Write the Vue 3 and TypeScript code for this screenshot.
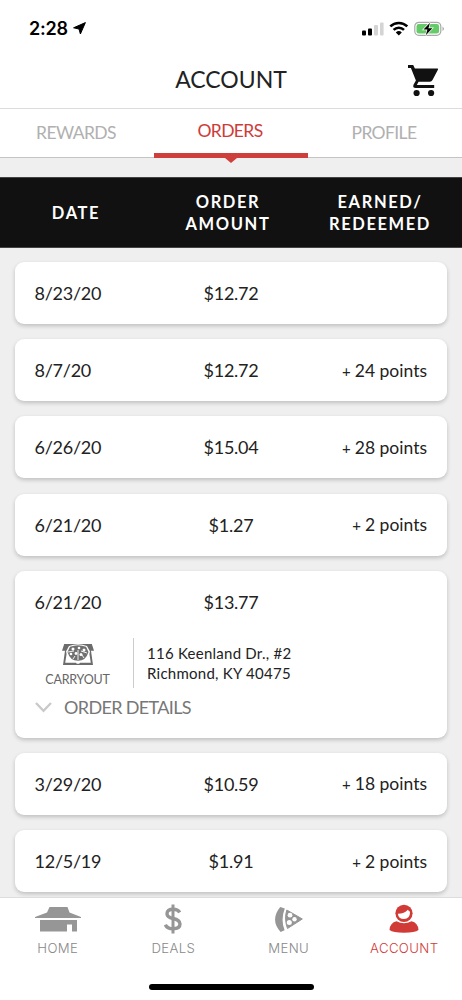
<script setup lang="ts">
interface Order {
  date: string
  amount: string
  points?: string
  open?: boolean
}

const tabs = [
  { label: 'REWARDS', active: false },
  { label: 'ORDERS', active: true },
  { label: 'PROFILE', active: false },
]

const orders: Order[] = [
  { date: '8/23/20', amount: '$12.72' },
  { date: '8/7/20', amount: '$12.72', points: '24 points' },
  { date: '6/26/20', amount: '$15.04', points: '28 points' },
  { date: '6/21/20', amount: '$1.27', points: '2 points' },
  { date: '6/21/20', amount: '$13.77', open: true },
  { date: '3/29/20', amount: '$10.59', points: '18 points' },
  { date: '12/5/19', amount: '$1.91', points: '2 points' },
]
</script>

<template>
  <div class="screen">
    <div class="status">
      <span class="time">2:28</span>
      <svg class="loc" width="13" height="13" viewBox="0 0 13 13"><path d="M12.4.6 7.400 12 6 7 .6 5.800Z" fill="#000" stroke="#000" stroke-width="1" stroke-linejoin="round" /></svg>
      <svg class="indicators" width="84" height="16" viewBox="0 0 84 16">
        <rect x="0" y="9.500" width="4" height="5" rx="1" />
        <rect x="6" y="7.500" width="4" height="7" rx="1" />
        <rect x="12" y="4" width="4" height="10.500" rx="1" fill="#d4d4d4" />
        <rect x="18" y="1.500" width="3.600" height="13" rx="1" fill="#d4d4d4" />
        <g fill="none" stroke="#000" stroke-width="2.600">
          <path d="M28.300 5.400a12.200 12.200 0 0 1 17 0" />
          <path d="M31.600 8.900a7.400 7.400 0 0 1 10.400 0" />
        </g>
        <path d="M33.800 11.400a4.300 4.300 0 0 1 6 0l-3 3Z" />
        <rect x="52.800" y="1.300" width="26" height="13" rx="4" fill="#fff" stroke="#a9a9a9" stroke-width="1.200" />
        <rect x="54.500" y="3" width="22.600" height="9.600" rx="2.400" fill="#65cb68" />
        <path d="M80.500 5.500q3 2.300 0 4.600Z" fill="#aaa" />
        <path d="M68 1.800 61.500 8.500h3.900l-1.600 5.700 6.600-7h-4Z" stroke="#fff" stroke-width="1.400" paint-order="stroke" />
      </svg>
    </div>

    <header class="titlebar">
      <h1>ACCOUNT</h1>
      <svg class="cart" width="31" height="32" viewBox="0 0 31 32">
        <g fill="#111">
          <path d="M0 0h5.200l1.700 3.400h22.500q1.100 0 .5 1.300l-5.400 10.400q-.9 1.700-2.600 1.700H10.600l-1.800 3.100h17.400v3H7.700q-3.300 0-2.200-3.200l2.400-4.200L2.900 3H0Z" />
          <circle cx="8.600" cy="28" r="3.100" /><circle cx="23.100" cy="28" r="3.100" />
        </g>
      </svg>
    </header>

    <nav class="tabs">
      <div v-for="t in tabs" :key="t.label" class="tab" :class="{ active: t.active }">
        <span>{{ t.label }}</span>
      </div>
    </nav>

    <div class="columns">
      <span class="c-date">DATE</span>
      <span class="c-amount">ORDER<br />AMOUNT</span>
      <span class="c-earned">EARNED/<br />REDEEMED</span>
    </div>

    <main class="list">
      <article v-for="(o, i) in orders" :key="i" class="card">
        <div class="row">
          <span class="date">{{ o.date }}</span>
          <span class="amount">{{ o.amount }}</span>
          <span class="points"><template v-if="o.points"><i>+</i>{{ o.points }}</template></span>
        </div>
        <template v-if="o.open">
          <div class="info">
            <div class="carryout">
              <svg width="34" height="23" viewBox="0 0 34 23">
                <path d="M3.200 1h27.600L33 7.800h-3L32 22H2L4 7.800H1Z" fill="#6c6c6c" />
                <path d="M6 8.500h22l1.800 11.300H19l-.8 1h-2.400l-.8-1H4.200Z" fill="#fff" />
                <path d="M8 3Q17-.5 26 3l3 5.500Q27 18.500 17 18.500T5 8.500Z" fill="#fff" />
                <path d="M9 3.800Q17 .8 25 3.800L27.500 9Q25 17.800 17 17.800T6.500 9Z" fill="#707070" />
                <g fill="#fff"><circle cx="12" cy="6" r="1.500" /><circle cx="18" cy="5" r="1.300" /><circle cx="23" cy="7" r="1.500" /><circle cx="15" cy="10.500" r="1.400" /><circle cx="20" cy="11.500" r="1.500" /><circle cx="10" cy="11" r="1.300" /></g>
                <path d="m17 7 0 10M7 9l6-1M20 8l6 2M12 16l2-3M23 15l-2-3" stroke="#fff" stroke-width=".9" />
              </svg>
              <span>CARRYOUT</span>
            </div>
            <address>116 Keenland Dr., #2<br />Richmond, KY 40475</address>
          </div>
          <div class="details">
            <svg width="17" height="11" viewBox="0 0 17 11"><path d="m1 1 7.500 7.800L16 1" fill="none" stroke="#c9c9c9" stroke-width="2.300" /></svg>
            <span>ORDER DETAILS</span>
          </div>
        </template>
      </article>
    </main>

    <nav class="bottom">
      <div class="item home">
        <svg width="46" height="30" viewBox="0 0 46 30" fill="#969696">
          <path d="M14.500 3h18l2 5.500L46 13v1H0v-1l12-4.500Z" />
          <path d="M5 16h37v11.500h-5v-7h-5v7H5Z" />
        </svg>
        <span>HOME</span>
      </div>
      <div class="item deals">
        <svg width="20" height="30" viewBox="0 0 20 30" fill="none" stroke="#969696">
          <path d="M10 .5v29" stroke-width="3" />
          <path d="M16.800 8.400Q14.800 5.200 10 5.200q-6 0-6 4.500 0 3.500 6 4.800 7 1.400 7 5.600 0 4.700-7 4.700-5.800 0-7.700-4.100" stroke-width="3.400" />
        </svg>
        <span>DEALS</span>
      </div>
      <div class="item menu">
        <svg width="28" height="30" viewBox="0 0 28 30">
          <path d="M5.200 3 9.800 4.500q-4.400 11-.2 21.700l-4 1.700q-10.900-12-.4-24.900Z" fill="#969696" />
          <path d="M11.800 6 27.300 15 12.500 24.500Q9 15 11.800 6Z" fill="#969696" stroke="#969696" stroke-linejoin="round" />
          <g fill="#fff"><circle cx="15" cy="11.200" r="2.400" /><circle cx="19.500" cy="15.200" r="2.200" /><circle cx="14.300" cy="18.400" r="2.500" /></g>
        </svg>
        <span>MENU</span>
      </div>
      <div class="item account">
        <svg width="30" height="30" viewBox="0 0 30 30">
          <circle cx="15" cy="9.300" r="8.600" fill="#d03a37" />
          <path d="M8.900 9.700q6.500 0 10-3.900.9 1.700 2.200 2-.1 7.200-6.100 7.200-5.700 0-6.100-5.300Z" fill="#fff" />
          <path d="M.5 26q.5-7.300 7-8.700 7.500 3.700 15 0 6.500 1.400 7 8.700Q26 28.700 15 28.700T.5 26Z" fill="#d03a37" />
        </svg>
        <span>ACCOUNT</span>
      </div>
      <div class="home-indicator"></div>
    </nav>
  </div>
</template>

<style>
body {
  margin: 0;
}
</style>

<style scoped>
.screen {
  width: 462px;
  height: 1000px;
  overflow: hidden;
  display: flex;
  flex-direction: column;
  background: #efefef;
  font-family: Lato, sans-serif;
  color: #222;
}
.status {
  height: 52px;
  flex: none;
  background: #fff;
  display: flex;
  align-items: flex-start;
  box-sizing: border-box;
  padding: 17px 16px 0 29px;
}
.time {
  font: 600 18px/23px Inter, sans-serif;
  letter-spacing: -0.200px;
  color: #000;
}
.loc {
  margin: 5px 0 0 5px;
}
.indicators {
  margin: 4px 0 0 auto;
}
.titlebar {
  height: 56px;
  flex: none;
  background: #fff;
  border-bottom: 1px solid #dcdcdc;
  display: grid;
  grid-template-columns: 1fr auto 1fr;
  align-items: center;
}
h1 {
  grid-column: 2;
  margin: 0 0 3px;
  font-size: 23px;
  line-height: 30px;
  font-weight: 400;
}
.cart {
  justify-self: end;
  margin: 1px 23px 0 0;
}
.tabs {
  height: 48px;
  flex: none;
  display: grid;
  grid-template-columns: repeat(3, 1fr);
  background: #fff;
}
.tab {
  box-sizing: border-box;
  height: 49px;
  padding: 13px 2px 0 0;
  text-align: center;
  border-bottom: 1px solid #c4c4c4;
  color: #b0b0b0;
  font-size: 17.500px;
  line-height: 22px;
  letter-spacing: -0.600px;
  position: relative;
}
.tab.active {
  color: #ce3b39;
  border-bottom: 5px solid #ce3f3c;
  padding-top: 11px;
}
.tab.active::after {
  content: '';
  position: absolute;
  left: 71px;
  bottom: -10px;
  border: 6px solid transparent;
  border-top: 5px solid #ce3f3c;
  border-bottom: 0;
}
.columns {
  flex: none;
  margin-top: 20px;
  height: 71px;
  box-sizing: border-box;
  border: solid #444;
  border-width: 1px 0;
  background: #111;
  color: #fff;
  font-weight: 700;
  font-size: 16.500px;
  line-height: 22.500px;
  letter-spacing: 1.600px;
  text-align: center;
  display: grid;
  grid-template-columns: 152px 152px 152px;
  align-items: center;
  padding-top: 1px;
}
.list {
  flex: 1;
  min-height: 0;
  overflow: hidden;
  padding: 14px 15px 0;
}
.card {
  background: #fff;
  border-radius: 9px;
  box-shadow: 0 2px 4px rgba(0, 0, 0, 0.2);
  margin-bottom: 15.200px;
  padding: 0 20px;
}
.row {
  height: 62px;
  display: grid;
  grid-template-columns: 130px 132px 1fr;
  align-items: center;
  font-size: 18px;
  letter-spacing: -0.250px;
}
.date {
  margin-left: -0.500px;
}
.amount {
  text-align: center;
}
.points {
  text-align: right;
  font-size: 17.500px;
  letter-spacing: 0;
}
.points i {
  font-style: normal;
  font-size: 15px;
  margin-right: 4px;
}
.info {
  display: flex;
  height: 50px;
  margin-top: 5px;
}
.carryout {
  width: 99px;
  border-right: 1px solid #ccc;
  box-sizing: border-box;
  padding: 5px 13px 0 0;
  display: flex;
  flex-direction: column;
  align-items: center;
  color: #666;
  font-size: 12.500px;
  line-height: 16px;
  letter-spacing: -0.200px;
}
.carryout span {
  margin-top: 6px;
}
address {
  font-style: normal;
  font-size: 15px;
  letter-spacing: 0.250px;
  line-height: 20px;
  padding: 5px 0 0 13px;
}
.details {
  height: 50px;
  box-sizing: border-box;
  padding-top: 7px;
  display: flex;
  align-items: flex-start;
  gap: 12px;
  color: #777;
  font-size: 18px;
  line-height: 24px;
  letter-spacing: -0.650px;
}
.details svg {
  margin-top: 7px;
}
.bottom {
  position: relative;
  flex: none;
  height: 103px;
  box-sizing: border-box;
  border-top: 1px solid #ddd;
  background: #fff;
  display: grid;
  grid-template-columns: repeat(4, 115.500px);
  padding-top: 6px;
}
.item {
  display: flex;
  flex-direction: column;
  align-items: center;
  font: 300 13.200px/18px Inter, sans-serif;
  letter-spacing: 0.350px;
  color: #888;
}
.item span {
  margin-top: 5px;
}
.account {
  color: #d03a37;
}
.home-indicator {
  position: absolute;
  left: 149px;
  bottom: 10px;
  width: 165px;
  height: 6px;
  border-radius: 3px;
  background: #000;
}
</style>
